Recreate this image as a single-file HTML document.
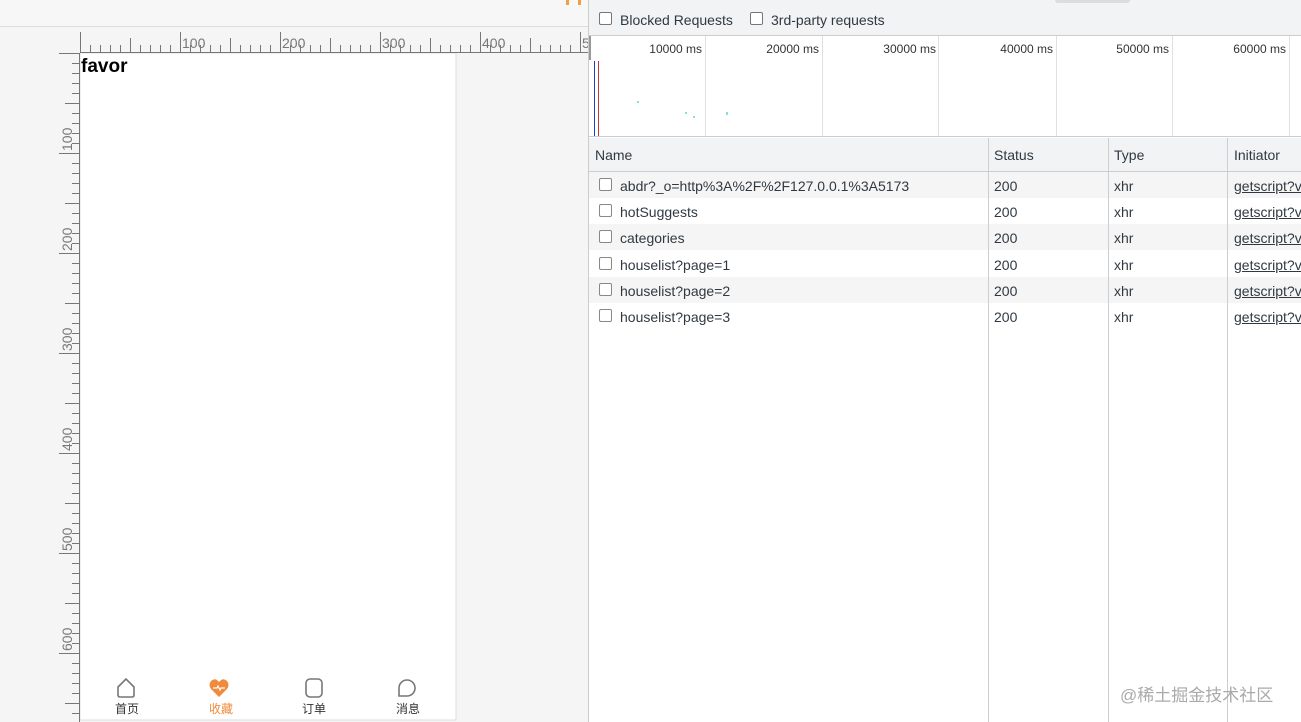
<!DOCTYPE html>
<html><head><meta charset="utf-8"><style>
*{margin:0;padding:0;box-sizing:border-box}
body{width:1301px;height:722px;overflow:hidden;background:#f5f5f5;font-family:"Liberation Sans","Noto Sans CJK SC",sans-serif;position:relative}
.abs{position:absolute}
.dt{font-family:"Liberation Sans",sans-serif;font-size:14px;color:#303942}
.row{position:absolute;left:589px;width:712px;height:26px}
.cb{position:absolute;width:13px;height:13px;border:1px solid #767676;border-radius:2px;background:#fff}
.tab{position:absolute;top:701px;width:50px;text-align:center;font-size:12px;line-height:16px;color:#333;font-family:"Noto Sans CJK SC",sans-serif}
</style></head><body>
<div class="abs" style="left:0;top:0;width:588px;height:27px;background:#f7f7f7;border-bottom:1px solid #ddd"></div>
<div class="abs" style="left:566px;top:0;width:3px;height:5px;background:#f0a040"></div>
<div class="abs" style="left:578px;top:0;width:3px;height:5px;background:#f0a040"></div>
<svg class="abs" style="left:0;top:0" width="588" height="722">
<rect x="80" y="53" width="376" height="667" fill="#fff" stroke="#ddd"/>
<g stroke="#777" stroke-width="1">
<line x1="80" y1="52.5" x2="588" y2="52.5"/>
<line x1="79.5" y1="53" x2="79.5" y2="722"/>
</g>
<g id="h" stroke="#777"></g><g id="v" stroke="#777"></g>
<g font-size="14" fill="#777" font-family="Liberation Sans">
<text x="182" y="48">100</text><text x="282" y="48">200</text><text x="382" y="48">300</text><text x="482" y="48">400</text><text x="582" y="48">5</text>
<g transform="rotate(-90)"><text x="-151" y="72">100</text><text x="-251" y="72">200</text><text x="-351" y="72">300</text><text x="-451" y="72">400</text><text x="-551" y="72">500</text><text x="-651" y="72">600</text></g>
</g>
</svg>
<div class="abs" style="left:81px;top:56px;font-size:19px;font-weight:bold;color:#000">favor</div>
<svg class="abs" style="left:115px;top:677px" width="24" height="22"><path d="M3 10 L11 2 L19 10 L19 18 Q19 20 17 20 L5 20 Q3 20 3 18Z" fill="none" stroke="#777" stroke-width="1.6"/></svg>
<svg class="abs" style="left:208px;top:677px" width="24" height="22"><path d="M11 20 L3 12 Q0 8 3 4 Q7 0 11 5 Q15 0 19 4 Q22 8 19 12Z" fill="#f08a3c"/><path d="M5 11 H9 L10 9 L12 13 L13 11 H17" stroke="#fff" stroke-width="1.2" fill="none"/></svg>
<svg class="abs" style="left:303px;top:677px" width="24" height="22"><rect x="3" y="2" width="16" height="18" rx="4" fill="none" stroke="#777" stroke-width="1.6"/></svg>
<svg class="abs" style="left:396px;top:677px" width="24" height="22"><path d="M3 19 L3 11 A8 8 0 1 1 11 19Z" fill="none" stroke="#777" stroke-width="1.6"/></svg>
<div class="tab" style="left:102px">首页</div>
<div class="tab" style="left:196px;color:#f08a3c">收藏</div>
<div class="tab" style="left:289px">订单</div>
<div class="tab" style="left:383px">消息</div>

<div class="abs" style="left:588px;top:0;width:713px;height:722px;background:#fff;border-left:1px solid #ccc"></div>
<div class="abs" style="left:589px;top:0;width:712px;height:36px;background:#f1f3f4;border-bottom:1px solid #cbcdd1"></div>
<div class="abs" style="left:1055px;top:0;width:75px;height:3px;background:#ddd;border-radius:0 0 4px 4px"></div>
<div class="cb" style="left:599px;top:12px"></div><div class="abs dt" style="left:620px;top:12px">Blocked Requests</div>
<div class="cb" style="left:750px;top:12px"></div><div class="abs dt" style="left:771px;top:12px">3rd-party requests</div>
<svg class="abs" style="left:589px;top:36px" width="712" height="102">
<g stroke="#e0e0e0"><line x1="116.5" y1="0" x2="116.5" y2="100"/><line x1="233.5" y1="0" x2="233.5" y2="100"/><line x1="349.5" y1="0" x2="349.5" y2="100"/><line x1="467.5" y1="0" x2="467.5" y2="100"/><line x1="583.5" y1="0" x2="583.5" y2="100"/><line x1="700.5" y1="0" x2="700.5" y2="100"/></g>
<line x1="0" y1="100.5" x2="712" y2="100.5" stroke="#cbcdd1"/>
<line x1="1" y1="0" x2="1" y2="24" stroke="#999" stroke-width="2"/>
<line x1="5.5" y1="25" x2="5.5" y2="100" stroke="#1a3ecc"/>
<line x1="9.5" y1="25" x2="9.5" y2="100" stroke="#c33"/>
<g fill="#8dd" ><rect x="96" y="76" width="2" height="2"/><rect x="137" y="76" width="2" height="3"/><rect x="104" y="80" width="2" height="2"/><rect x="48" y="65" width="2" height="2"/></g>
<g font-size="12" fill="#333" font-family="Liberation Sans" text-anchor="end"><text x="113" y="17">10000 ms</text><text x="230" y="17">20000 ms</text><text x="347" y="17">30000 ms</text><text x="464" y="17">40000 ms</text><text x="580" y="17">50000 ms</text><text x="697" y="17">60000 ms</text></g>
</svg>
<div class="abs" style="left:589px;top:138px;width:712px;height:34px;background:#f1f3f4;border-bottom:1px solid #cbcdd1"></div>
<div class="row" style="top:172px;background:#f5f5f5"></div>
<div class="row" style="top:224px;background:#f5f5f5"></div>
<div class="row" style="top:277px;background:#f5f5f5"></div>
<div class="abs" style="left:988px;top:138px;width:1px;height:584px;background:#cbcdd1"></div>
<div class="abs" style="left:1108px;top:138px;width:1px;height:584px;background:#cbcdd1"></div>
<div class="abs" style="left:1227px;top:138px;width:1px;height:584px;background:#cbcdd1"></div>
<div class="abs dt" style="left:595px;top:147px">Name</div>
<div class="abs dt" style="left:994px;top:147px">Status</div>
<div class="abs dt" style="left:1114px;top:147px">Type</div>
<div class="abs dt" style="left:1234px;top:147px">Initiator</div>
<div id="rows"></div>
<div class="abs" style="left:1120px;top:681px;font-size:17px;color:#aaa;font-family:'Liberation Sans','Noto Sans CJK SC',sans-serif">@稀土掘金技术社区</div>
<script>
var h=document.getElementById('h'),v=document.getElementById('v'),s='';
for(var x=80;x<=588;x+=10){var l=(x-80)%100==0?20:((x-80)%50==0?14:7);s+='<line x1="'+(x+.5)+'" y1="'+(52-l)+'" x2="'+(x+.5)+'" y2="52"/>';}
h.innerHTML=s;s='';
for(var y=53;y<=722;y+=10){var l=(y-53)%100==0?20:((y-53)%50==0?14:7);s+='<line x1="'+(79-l)+'" y1="'+(y+.5)+'" x2="79" y2="'+(y+.5)+'"/>';}
v.innerHTML=s;
var n=['abdr?_o=http%3A%2F%2F127.0.0.1%3A5173','hotSuggests','categories','houselist?page=1','houselist?page=2','houselist?page=3'],t=[172,198,224,251,277,303],o='';
for(var i=0;i<6;i++){o+='<div class="cb" style="left:599px;top:'+(t[i]+6)+'px;border-color:#888"></div><div class="abs dt" style="left:620px;top:'+(t[i]+6)+'px">'+n[i]+'</div><div class="abs dt" style="left:994px;top:'+(t[i]+6)+'px">200</div><div class="abs dt" style="left:1114px;top:'+(t[i]+6)+'px">xhr</div><div class="abs dt" style="left:1234px;top:'+(t[i]+6)+'px;text-decoration:underline;white-space:nowrap;width:67px;overflow:hidden">getscript?v</div>';}
document.getElementById('rows').innerHTML=o;
</script>
</body></html>
